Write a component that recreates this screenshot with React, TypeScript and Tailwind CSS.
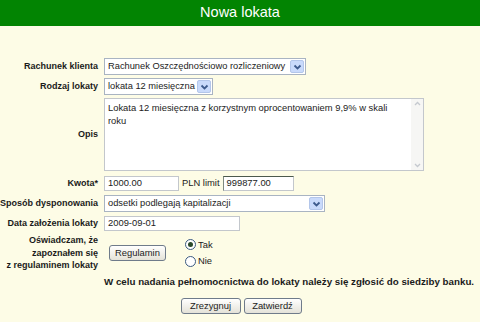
import { ReactNode } from 'react';

function Chevron() {
  return (
    <svg width="9" height="6" viewBox="0 0 9 6">
      <polyline points="1.5,1.5 4.5,4.5 7.5,1.5" fill="none" stroke="#3d5a8c" strokeWidth="1.8" />
    </svg>
  );
}

// XP style combo box
function Select({ width, children }: { width: string; children: ReactNode }) {
  return (
    <div className={`${width} h-[17px] flex items-center bg-white border border-[#a9b4c2] pl-[3px] pr-[1px] text-[9.3px] text-[#222]`}>
      <span className="flex-1 whitespace-nowrap">{children}</span>
      <span className="w-[14px] h-[13px] shrink-0 flex items-center justify-center rounded-[2px] bg-[#c9dafb] border border-[#b3c6ea]">
        <Chevron />
      </span>
    </div>
  );
}

function Field({ width, children, dark }: { width: string; children: ReactNode; dark?: boolean }) {
  return (
    <div
      className={`${width} h-[15px] flex items-center bg-white border border-[#c3c7cc] px-[3px] text-[9.4px] text-[#222] ${
        dark ? 'border-t-[#4c5a4c] border-l-[#7f8a7f]' : ''
      }`}
    >
      {children}
    </div>
  );
}

function Row({ label, className, children }: { label: ReactNode; className: string; children: ReactNode }) {
  return (
    <div className={`flex items-center ${className}`}>
      <div className="w-[98px] shrink-0 text-right font-bold text-[9px] text-[#1a1a1a] leading-[12.5px]">{label}</div>
      <div className="ml-[6px] flex items-center">{children}</div>
    </div>
  );
}

function XpButton({ width, children }: { width: string; children: ReactNode }) {
  return (
    <div
      className={`${width} h-[16px] flex items-center justify-center rounded-[3px] border border-[#6f7b8a] bg-gradient-to-b from-white to-[#e4e2d8] text-[9.4px] text-[#222]`}
    >
      {children}
    </div>
  );
}

function Radio({ checked }: { checked?: boolean }) {
  return (
    <span className="w-[11px] h-[11px] rounded-full border border-[#3b5a80] bg-white flex items-center justify-center">
      {checked && <span className="w-[5px] h-[5px] rounded-full bg-[#2b4a2b]" />}
    </span>
  );
}

export default function App() {
  return (
    <div className="w-[480px] h-[322px] bg-[#fdfce6] font-['Liberation_Sans',Arial,sans-serif] overflow-hidden">
      <div className="h-[26px] bg-[#028402] flex items-center justify-center text-white text-[14.5px]">
        Nowa lokata
      </div>

      <div className="pt-[32px]">
        <Row label="Rachunek klienta" className="h-[17px]">
          <Select width="w-[202px]">Rachunek Oszczędnościowo rozliczeniowy</Select>
        </Row>

        <Row label="Rodzaj lokaty" className="h-[17px] mt-[3px]">
          <Select width="w-[109px]">lokata 12 miesięczna</Select>
        </Row>

        <Row label="Opis" className="h-[73px] mt-[3px]">
          <div className="w-[320px] h-[73px] flex bg-white border border-[#c3c7cc]">
            <div className="flex-1 px-[3px] pt-[2px] text-[9.4px] leading-[13px] text-[#222]">
              Lokata 12 miesięczna z korzystnym oprocentowaniem 9,9% w skali
              <br />
              roku
            </div>
            <div className="w-[12px] flex flex-col justify-between items-center bg-[#f6f6f4] py-[2px]">
              <svg width="7" height="5" viewBox="0 0 7 5">
                <polyline points="1,4 3.5,1.5 6,4" fill="none" stroke="#c5c9cf" strokeWidth="1.3" />
              </svg>
              <svg width="7" height="5" viewBox="0 0 7 5">
                <polyline points="1,1 3.5,3.5 6,1" fill="none" stroke="#c5c9cf" strokeWidth="1.3" />
              </svg>
            </div>
          </div>
        </Row>

        <Row label="Kwota*" className="h-[15px] mt-[5px]">
          <Field width="w-[75px]">1000.00</Field>
          <span className="ml-[3px] mr-[3px] text-[9.4px] text-[#222]">PLN limit</span>
          <Field width="w-[71px]" dark>
            999877.00
          </Field>
        </Row>

        <Row label="Sposób dysponowania" className="h-[17px] mt-[4px]">
          <Select width="w-[221px]">odsetki podlegają kapitalizacji</Select>
        </Row>

        <Row label="Data założenia lokaty" className="h-[15px] mt-[4px]">
          <Field width="w-[136px]">2009-09-01</Field>
        </Row>

        <Row
          label={
            <>
              Oświadczam, że
              <br />
              zapoznałem się
              <br />
              z regulaminem lokaty
            </>
          }
          className="h-[38px] mt-[3px]"
        >
          <div className="ml-[5px]">
            <XpButton width="w-[57px]">Regulamin</XpButton>
          </div>
          <div className="ml-[19px] flex flex-col gap-[2px] text-[9.4px] text-[#222]">
            <label className="flex items-center gap-[2px]">
              <Radio checked />
              Tak
            </label>
            <label className="flex items-center gap-[2px]">
              <Radio />
              Nie
            </label>
          </div>
        </Row>

        <div className="mt-[3px] pl-[104px] font-bold text-[9.75px] text-[#1a1a1a] whitespace-nowrap">
          W celu nadania pełnomocnictwa do lokaty należy się zgłosić do siedziby banku.
        </div>

        <div className="mt-[8px] flex justify-center gap-[3px] pl-[2px]">
          <XpButton width="w-[60px]">Zrezygnuj</XpButton>
          <XpButton width="w-[58px]">Zatwierdź</XpButton>
        </div>
      </div>
    </div>
  );
}
